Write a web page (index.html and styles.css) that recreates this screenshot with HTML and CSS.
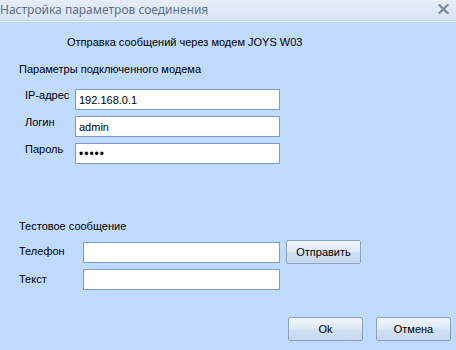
FILE: index.html
```html
<!DOCTYPE html>
<html lang="ru">
<head>
<meta charset="utf-8">
<title>Настройка параметров соединения</title>
<link rel="stylesheet" href="styles.css">
</head>
<body>
<div class="dialog">
  <div class="titlebar">
    <span class="title">Настройка параметров соединения</span>
    <svg class="close" width="11" height="10" viewBox="0 0 11 10" aria-label="Закрыть">
      <path d="M1.5 1.2 L9.5 8.8 M9.5 1.2 L1.5 8.8" stroke="#7d8ca3" stroke-width="2.3" stroke-linecap="square" fill="none"/>
    </svg>
  </div>
  <div class="body">
    <div class="heading">Отправка сообщений через модем JOYS W03</div>
    <div class="section">Параметры подключенного модема</div>
    <div class="grid modem">
      <label class="lbl">IP-адрес</label>
      <input class="field" type="text" value="192.168.0.1">
      <label class="lbl">Логин</label>
      <input class="field" type="text" value="admin">
      <label class="lbl">Пароль</label>
      <input class="field pwd" type="password" value="12345">
    </div>
    <div class="section test-title">Тестовое сообщение</div>
    <div class="grid test">
      <label class="lbl2">Телефон</label>
      <input class="field" type="text" value="">
      <button class="btn">Отправить</button>
      <label class="lbl2">Текст</label>
      <input class="field" type="text" value="">
    </div>
    <div class="footer">
      <button class="btn">Ok</button>
      <button class="btn">Отмена</button>
    </div>
  </div>
</div>
</body>
</html>
```
FILE: styles.css
```css
html, body {
  margin: 0;
  padding: 0;
  width: 456px;
  height: 350px;
  overflow: hidden;
  background: #bfdbff;
}
.dialog {
  width: 456px;
  height: 350px;
  display: flex;
  flex-direction: column;
  font-family: "Liberation Sans", Arial, sans-serif;
  font-size: 11px;
  color: #000;
}
.titlebar {
  height: 20px;
  display: flex;
  align-items: center;
  justify-content: space-between;
  background: linear-gradient(#e7eefa, #d8e4f5);
  border-bottom: 1px solid #c3d6f0;
  box-shadow: 0 1px 0 #e4efff;
  padding: 0 7px 0 0;
}
.title {
  font-family: "Noto Sans", sans-serif;
  font-size: 12px;
  color: #606f86;
  margin-left: 0;
  line-height: 20px;
}
.close {
  display: block;
  margin-top: -2px;
}
.body {
  flex: 1;
  display: flex;
  flex-direction: column;
  padding-top: 1px;
}
.heading {
  line-height: 14px;
  margin: 13px 0 0 67px;
}
.section {
  line-height: 14px;
  margin: 13px 0 0 19px;
}
.grid {
  display: grid;
  align-items: center;
}
.modem {
  margin: 13px 0 0 25px;
  grid-template-columns: 50px 205px;
  grid-auto-rows: 21px;
  row-gap: 6px;
}
.lbl {
  align-self: start;
  line-height: 13px;
}
.field {
  box-sizing: border-box;
  height: 21px;
  width: 100%;
  margin: 0;
  border: 1px solid #7b9bd0;
  background: #fff;
  padding: 0 3px;
  font-family: "Liberation Sans", Arial, sans-serif;
  font-size: 11px;
  color: #000;
  outline: none;
}
.pwd {
  font-size: 12px;
  letter-spacing: 1px;
}
.test-title {
  margin-top: 55px;
}
.test {
  margin: 7px 0 0 19px;
  grid-template-columns: 64px 197px 76px;
  grid-template-rows: 24px 21px;
  column-gap: 0;
  row-gap: 5px;
}
.test .btn {
  margin-left: 6px;
}
.lbl2 {
  line-height: 13px;
  margin-top: -1px;
}
.btn {
  box-sizing: border-box;
  height: 24px;
  width: 75px;
  margin: 0;
  padding: 0;
  border: 1px solid #8da2bf;
  border-radius: 2px;
  background: linear-gradient(#f1f6fd 0%, #e1ebf8 45%, #cfdff3 55%, #c9daf0 100%);
  font-family: "Liberation Sans", Arial, sans-serif;
  font-size: 11px;
  color: #000;
}
.footer {
  display: flex;
  justify-content: flex-end;
  gap: 13px;
  margin: 27px 5px 0 0;
}
```
